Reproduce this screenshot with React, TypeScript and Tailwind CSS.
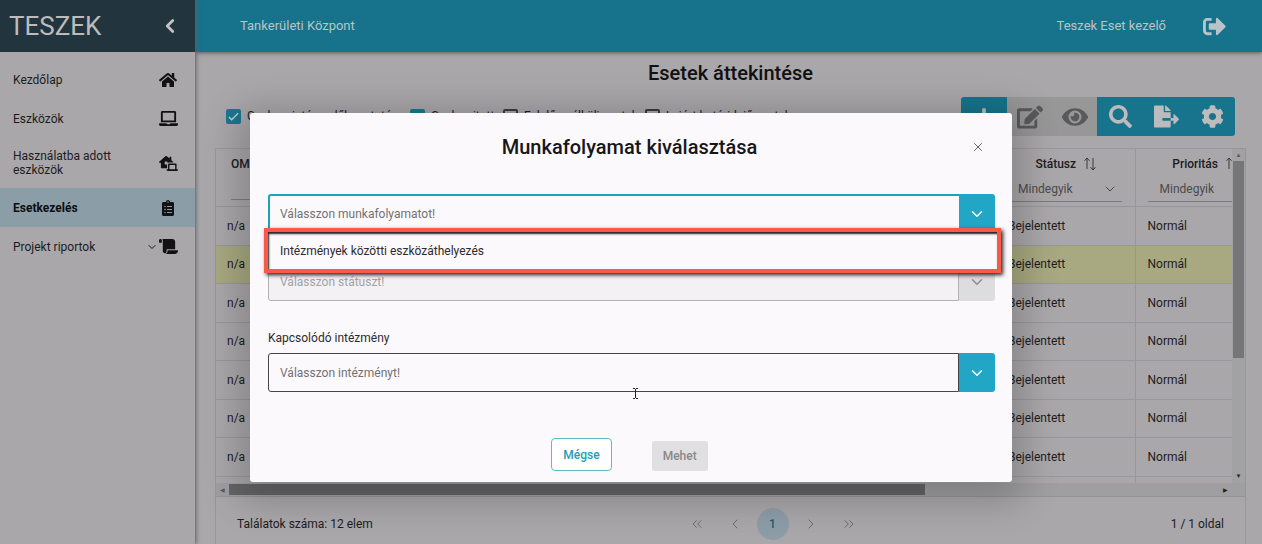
import { useState } from 'react';
import {
  FaHome,
  FaLaptop,
  FaLaptopHouse,
  FaClipboardList,
  FaScroll,
  FaSignOutAlt,
  FaPlus,
  FaEdit,
  FaEye,
  FaSearch,
  FaFileExport,
  FaCog,
} from 'react-icons/fa';
import {
  ChevronDown,
  ChevronLeft,
  ChevronRight,
  ChevronsLeft,
  ChevronsRight,
  X,
} from 'lucide-react';

const menuItems = [
  { name: 'Kezdőlap', icon: <FaHome className="size-[18px]" /> },
  { name: 'Eszközök', icon: <FaLaptop className="size-[19px]" /> },
  { name: 'Használatba adott eszközök', icon: <FaLaptopHouse className="size-[19px]" /> },
  { name: 'Esetkezelés', icon: <FaClipboardList className="size-[16px]" />, active: true },
  { name: 'Projekt riportok', icon: <FaScroll className="size-[19px]" />, expandable: true },
];

const filters = [
  { name: 'Csak az intézendők mutatása', checked: true, width: 'w-[184px]' },
  { name: 'Csak nyitott', checked: true, width: 'w-[93px]' },
  { name: 'Felelős nélküli esetek', checked: false, width: 'w-[142px]' },
  { name: 'Lejárt határidejű esetek', checked: false, width: 'w-[160px]' },
];

const tools = [
  { name: 'Új', icon: <FaPlus className="size-5" />, enabled: true },
  { name: 'Szerkesztés', icon: <FaEdit className="size-[26px]" />, enabled: false },
  { name: 'Megtekintés', icon: <FaEye className="size-[26px]" />, enabled: false },
  { name: 'Keresés', icon: <FaSearch className="size-[23px]" />, enabled: true },
  { name: 'Exportálás', icon: <FaFileExport className="size-[25px]" />, enabled: true },
  { name: 'Beállítások', icon: <FaCog className="size-[23px]" />, enabled: true },
];

const rows = [1, 2, 3, 4, 5, 6, 7, 8];

function SortIcon() {
  return (
    <svg viewBox="0 0 12 14" className="w-3 h-[14px] shrink-0" fill="none" stroke="#3a393b">
      <path d="M3 12V1M0.5 3.8L3 1l2.5 2.8M9 1v12M6.5 10.2L9 13l2.5-2.8" />
    </svg>
  );
}

function Sidebar() {
  return (
    <aside className="w-[195px] shrink-0 bg-[#a9a7a9] shadow-[1px_0_4px_#5c5b5d] z-10">
      <div className="h-[52px] bg-[#22353e] flex items-center justify-between pl-[9px] pr-[14px]">
        <span className="text-[26px] text-[#bdbcbd]">TESZEK</span>
        <button aria-label="Menü összecsukása">
          <ChevronLeft className="size-[22px] text-[#c4c3c4]" strokeWidth={3} />
        </button>
      </div>
      <nav className="pt-2">
        {menuItems.map((item) => (
          <a
            key={item.name}
            href="#"
            className={`flex items-center justify-between pl-[13px] pr-[17px] leading-[14px] ${
              item.active ? 'bg-[#8b9da6] font-bold text-[#0b0f12]' : 'text-[#1d1c1e]'
            } ${item.name.length > 20 ? 'h-[50px]' : 'h-[39px]'}`}
          >
            <span className="max-w-[110px]">{item.name}</span>
            <span className="flex items-center text-[#121214]">
              {item.expandable && <ChevronDown className="size-3" />}
              <span className="w-5 flex justify-center">{item.icon}</span>
            </span>
          </a>
        ))}
      </nav>
    </aside>
  );
}

function Toolbar() {
  return (
    <div className="flex items-start justify-between">
      <div className="flex pl-[11px] pt-[11px]">
        {filters.map((filter) => (
          <label key={filter.name} className={`flex items-center h-4 whitespace-nowrap ${filter.width}`}>
            <input
              type="checkbox"
              defaultChecked={filter.checked}
              className="appearance-none size-[15px] mr-[6px] shrink-0 rounded-[2px] border-2 border-[#3b3a3c] checked:border-[#1a7890] checked:bg-[#1a7890] checked:bg-[url('data:image/svg+xml,%3Csvg%20xmlns=%22http://www.w3.org/2000/svg%22%20viewBox=%220%200%2012%2012%22%3E%3Cpath%20d=%22M1%206.5l3%203L11%202.5%22%20fill=%22none%22%20stroke=%22%23ccc%22%20stroke-width=%221.5%22/%3E%3C/svg%3E')]"
            />
            {filter.name}
          </label>
        ))}
      </div>
      <div className="flex h-[39px] mr-[11px] rounded-[3px] overflow-hidden">
        {tools.map((tool) => (
          <button
            key={tool.name}
            aria-label={tool.name}
            disabled={!tool.enabled}
            className={`flex items-center justify-center ${
              tool.enabled ? 'w-[46px] bg-[#17748c] text-[#bcbbbd]' : 'w-[45px] bg-[#989798] text-[#59585a]'
            }`}
          >
            {tool.icon}
          </button>
        ))}
      </div>
    </div>
  );
}

function CaseTable() {
  return (
    <div className="mt-3 border border-[#98969a]">
      <div className="flex h-[334px]">
        <div className="flex-1 overflow-hidden">
          <table className="w-full table-fixed border-collapse">
            <thead>
              <tr className="h-[57px] border-b border-[#98969a] align-top">
                <th className="w-[100px] pt-[6px] pl-[15px] text-left font-medium">
                  OM
                  <input aria-label="OM" className="block w-full h-[23px] mt-1 border-b border-[#7c7b7d]" />
                </th>
                <th />
                <th className="w-[142px] px-[13px] pt-[6px] font-medium">
                  <span className="flex items-center justify-center gap-2 pl-1">
                    Státusz <SortIcon />
                  </span>
                  <span className="flex items-center justify-between h-[25px] mt-1 pl-3 pr-1 border-b border-[#7c7b7d] font-normal text-[#4b4a4c]">
                    Mindegyik
                    <ChevronDown className="size-4" strokeWidth={1.5} />
                  </span>
                </th>
                <th className="w-[97px] pl-3 pt-[6px] border-l border-[#98969a] font-medium">
                  <span className="flex items-center justify-end gap-2 overflow-hidden">
                    Prioritás
                    <span className="w-[6px] overflow-hidden">
                      <SortIcon />
                    </span>
                  </span>
                  <span className="flex items-center h-[25px] mt-1 pl-3 border-b border-[#7c7b7d] font-normal text-[#4b4a4c]">
                    Mindegyik
                  </span>
                </th>
              </tr>
            </thead>
            <tbody>
              {rows.map((row) => (
                <tr
                  key={row}
                  className={`odd:h-[39px] even:h-[38px] border-b border-[#98969a] ${row === 2 ? 'bg-[#a8a981]' : ''}`}
                >
                  <td className="pl-[11px]">{row < 8 && 'n/a'}</td>
                  <td />
                  <td className="pl-[15px]">{row < 8 && 'Bejelentett'}</td>
                  <td className="pl-3 border-l border-[#98969a]">{row < 8 && 'Normál'}</td>
                </tr>
              ))}
            </tbody>
          </table>
        </div>
        <div className="w-[13px] bg-[#a2a1a3] flex flex-col items-center">
          <span className="h-3 pt-[3px] text-[6px] leading-[6px] text-[#59585a]">▲</span>
          <span className="w-[11px] h-[197px] bg-[#767577]" />
          <span className="mt-auto pb-1 text-[6px] leading-[6px] text-[#222]">▼</span>
        </div>
      </div>
      <div className="flex items-center h-[14px] pl-1 pr-[17px] bg-[#9f9ea0] border-b border-[#939294]">
        <span className="w-[9px] text-[6px] leading-[6px] text-[#59585a]">◀</span>
        <span className="w-[69%] h-[11px] bg-[#656466]" />
        <span className="ml-auto text-[6px] leading-[6px] text-[#222]">▶</span>
      </div>
      <div className="relative flex items-center justify-between h-[53px] px-[21px]">
        <span>Találatok száma: 12 elem</span>
        <div className="absolute inset-x-0 flex items-center justify-center gap-[22px] pl-[84px] text-[#6a696b]">
          <button aria-label="Első oldal"><ChevronsLeft className="size-4" strokeWidth={1.5} /></button>
          <button aria-label="Előző oldal"><ChevronLeft className="size-4" strokeWidth={1.5} /></button>
          <button className="size-8 -mx-2 rounded-full bg-[#8d9da7] text-[#145f73] font-medium">1</button>
          <button aria-label="Következő oldal"><ChevronRight className="size-4" strokeWidth={1.5} /></button>
          <button aria-label="Utolsó oldal"><ChevronsRight className="size-4" strokeWidth={1.5} /></button>
        </div>
        <span>1 / 1 oldal</span>
      </div>
    </div>
  );
}

interface DropdownProps {
  placeholder: string;
  label?: string;
  variant: 'focused' | 'disabled' | 'normal';
  onToggle?: () => void;
}

function Dropdown({ placeholder, label, variant, onToggle }: DropdownProps) {
  const border = {
    focused: 'border-2 border-[#1fa3b8] border-r-0 pl-[10px]',
    disabled: 'border border-[#b3b2b4] bg-[#f3f1f4] pl-[11px]',
    normal: 'border border-[#454446] pl-[11px]',
  }[variant];

  return (
    <button
      role="combobox"
      aria-label={label ?? placeholder}
      disabled={variant === 'disabled'}
      onClick={onToggle}
      className="flex w-full h-[39px] text-left"
    >
      <span
        className={`flex-1 h-full flex items-center rounded-l-[3px] ${border} ${
          variant === 'disabled' ? 'text-[#a3a2a4]' : 'text-[#727173]'
        }`}
      >
        {placeholder}
      </span>
      <span
        className={`w-9 h-full flex items-center justify-center rounded-r-[3px] ${
          variant === 'disabled' ? 'bg-[#dddcde] text-[#8f8e90]' : 'bg-[#21a6c6] text-white'
        }`}
      >
        <ChevronDown className="size-[18px]" />
      </span>
    </button>
  );
}

function WorkflowDialog() {
  const [open, setOpen] = useState(true);

  return (
    <div
      role="dialog"
      aria-labelledby="dialog-title"
      className="w-full max-w-[762px] bg-[#fcf9fd] rounded-[3px] pl-[18px] pr-[17px] pb-[11px] shadow-[0_8px_36px_12px_rgba(0,0,0,0.2)]"
    >
      <div className="relative flex items-center justify-center h-[68px] pr-1">
        <h2 id="dialog-title" className="text-[20px] font-medium text-[#171618]">
          Munkafolyamat kiválasztása
        </h2>
        <button aria-label="Bezárás" className="absolute right-[10px]">
          <X className="size-[14px] text-[#4c4b4d]" strokeWidth={1.5} />
        </button>
      </div>

      <div className="relative pt-[13px]">
        <Dropdown placeholder="Válasszon munkafolyamatot!" variant="focused" onToggle={() => setOpen(!open)} />
        {open && (
          <ul
            role="listbox"
            className="absolute -left-1 -right-[6px] top-[47px] h-[45px] flex items-center border-4 border-[#fb5948] bg-[#fcf9fd] shadow-[2px_2px_4px_#222,inset_1px_2px_2px_#222]"
          >
            <li role="option" aria-selected={false} className="px-3 text-[#2c2b2d]">
              Intézmények közötti eszközáthelyezés
            </li>
          </ul>
        )}
      </div>
      <div className="pt-[29px]">
        <Dropdown placeholder="Válasszon státuszt!" variant="disabled" />
      </div>
      <div className="pt-7 flex flex-col gap-[6px]">
        <span className="leading-[18px] text-[#2c2b2d]">Kapcsolódó intézmény</span>
        <Dropdown placeholder="Válasszon intézményt!" label="Kapcsolódó intézmény" variant="normal" />
      </div>

      <div className="flex items-end justify-center gap-10 pt-[46px] pr-1">
        <button className="h-[33px] px-[11px] rounded-[4px] border border-[#5dbcbf] bg-white text-[#1f9db5] font-medium">
          Mégse
        </button>
        <button disabled className="h-[30px] px-[11px] rounded-[3px] bg-[#e0dfe1] text-[#89888a] font-medium">
          Mehet
        </button>
      </div>
    </div>
  );
}

// text cursor resting over the dialog
function TextCursor() {
  return (
    <svg
      viewBox="0 0 5 11"
      className="absolute left-[633px] top-[388px] w-[5px] h-[11px]"
      fill="none"
      stroke="#222"
    >
      <path d="M0 0.5h2M3 0.5h2M2.5 1v9M0 10.5h2M3 10.5h2" />
    </svg>
  );
}

export default function App() {
  return (
    <div className="relative flex h-screen overflow-hidden bg-[#a9a7a9] text-[12px] text-[#1d1c1e] font-[Roboto,sans-serif]">
      <Sidebar />
      <div className="flex-1 min-w-0">
        <header className="h-[52px] bg-[#17728b] flex items-center justify-between pl-[45px] pr-9 text-[#b9c4c9] shadow-[0_1px_4px_#5c5b5d]">
          <span className="text-[13px]">Tankerületi Központ</span>
          <div className="flex items-center gap-[37px]">
            <span className="text-[13px]">Teszek Eset kezelő</span>
            <button aria-label="Kijelentkezés">
              <FaSignOutAlt className="size-[23px]" />
            </button>
          </div>
        </header>
        <main className="pl-5 pr-4">
          <h1 className="h-[45px] pt-[6px] text-center text-[20px] leading-[30px] font-medium text-[#111012]">
            Esetek áttekintése
          </h1>
          <Toolbar />
          <CaseTable />
        </main>
      </div>

      <div className="absolute inset-0 z-20 flex items-start justify-center pt-[113px]">
        <WorkflowDialog />
        <TextCursor />
      </div>
    </div>
  );
}
